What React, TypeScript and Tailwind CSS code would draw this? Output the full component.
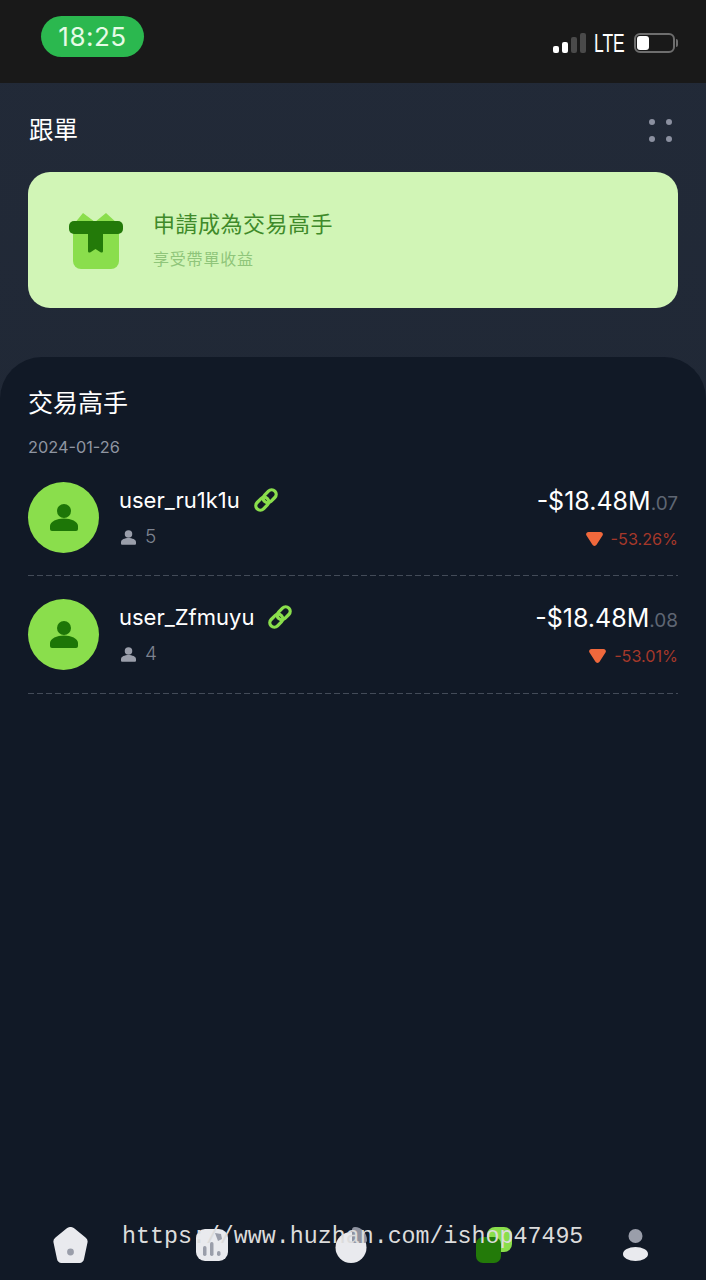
import React from "react";

const cjk = "font-['Inter','Noto_Sans_CJK_TC',sans-serif]";

const traders = [
  { name: "user_ru1k1u", followers: 5, whole: "-$18.48M", cents: ".07", pct: "-53.26%" },
  { name: "user_Zfmuyu", followers: 4, whole: "-$18.48M", cents: ".08", pct: "-53.01%" },
];

const PersonIcon = ({ className, fill }: { className: string; fill: string }) => (
  <svg viewBox="0 0 28 27" className={className} fill={fill}>
    <circle cx="14" cy="7" r="7" />
    <path d="M0 25v-3C0 17.500 7 14.500 14 14.500s14 3 14 7.500v3a2 2 0 0 1-2 2H2a2 2 0 0 1-2-2z" />
  </svg>
);

const LinkIcon = () => (
  <svg viewBox="0 0 24 24" className="h-[24px] w-[24px]" fill="none" stroke="#8ade4c" strokeWidth="3.300">
    <rect x="-0.500" y="7.500" width="14.500" height="9" rx="4.500" transform="rotate(-45 12 12)" />
    <rect x="10" y="7.500" width="14.500" height="9" rx="4.500" transform="rotate(-45 12 12)" />
  </svg>
);

const DownIcon = () => (
  <svg viewBox="0 0 17 14" className="h-[14px] w-[17px]">
    <path d="M2.500 0h12c2 0 3 2 2 3.600l-5.800 9c-1 1.700-3.400 1.700-4.400 0l-5.800-9C-.5 2 .5 0 2.500 0z" fill="#f0683c" />
  </svg>
);

function StatusBar() {
  return (
    <div className="flex h-[83px] shrink-0 justify-between bg-[#191919] pl-[41px] pr-[28px]">
      <div className="mt-[16px] flex h-[41px] w-[103px] items-center justify-center rounded-full bg-[#2bb84f] font-['Inter',sans-serif] text-[26px] tracking-[0.5px] text-[#e6fbe6]">
        18:25
      </div>
      <div className="mt-[33px] flex h-[20px] items-end gap-[8px]">
        <div className="flex items-end gap-[3px]">
          <span className="h-[7px] w-[6px] rounded-[2px] bg-white" />
          <span className="h-[11px] w-[6px] rounded-[2px] bg-white" />
          <span className="h-[16px] w-[6px] rounded-[2px] bg-[#4a4a4a]" />
          <span className="h-[20px] w-[6px] rounded-[2px] bg-[#4a4a4a]" />
        </div>
        <span className="w-[32px] origin-left scale-x-[0.7] whitespace-nowrap font-['Liberation_Sans',sans-serif] text-[25px] leading-[20px] text-white">LTE</span>
        <div className="flex items-center">
          <div className="flex h-[20px] w-[41px] items-center rounded-[6px] border-2 border-[#6e6e6e] pl-[1px]">
            <span className="h-[14px] w-[12px] rounded-[3px] bg-white" />
          </div>
          <span className="ml-[1px] h-[8px] w-[2px] rounded-r-full bg-[#6e6e6e]" />
        </div>
      </div>
    </div>
  );
}

function GiftIcon() {
  return (
    <svg viewBox="0 0 54 57" className="h-[57px] w-[54px]">
      <path d="M5 12l9-11 12 9 11-9 12 11z" fill="#8ade4c" />
      <path d="M4 12h46v37a8 8 0 0 1-8 8H12a8 8 0 0 1-8-8z" fill="#8ade4c" />
      <rect x="0" y="9" width="54" height="13" rx="5" fill="#237a09" />
      <path d="M19 21h15v18c0 1.500-1.500 2-2.500 1.200L26.500 37l-5 3.200C20.500 41 19 40.500 19 39z" fill="#237a09" />
    </svg>
  );
}

function TraderRow({ name, followers, whole, cents, pct }: (typeof traders)[number]) {
  return (
    <div className="flex h-[118px] flex-col pt-[23px] first:pt-[24px]">
      <div className="flex items-start justify-between">
        <div className="flex items-center gap-[20px]">
          <div className="flex h-[71px] w-[71px] items-center justify-center rounded-full bg-[#8ade4c]">
            <PersonIcon className="h-[27px] w-[28px]" fill="#1d7607" />
          </div>
          <div className="flex flex-col gap-[11px]">
            <div className="flex items-center gap-[14px]">
              <span className="text-[22px] leading-[28px] text-white">{name}</span>
              <LinkIcon />
            </div>
            <div className="flex items-center gap-[9px] pl-[2px]">
              <PersonIcon className="h-[15px] w-[15px]" fill="#9a9eaa" />
              <span className="text-[19px] font-light leading-[24px] text-[#7d8390]">{followers}</span>
            </div>
          </div>
        </div>
        <div className="flex flex-col items-end gap-[9px] pt-[3px]">
          <div className="flex items-baseline">
            <span className="text-[25px] leading-[32px] text-white">{whole}</span>
            <span className="text-[19px] leading-[32px] text-[#5f6673]">{cents}</span>
          </div>
          <div className="flex items-center gap-[8px]">
            <DownIcon />
            <span className="text-[16.200px] leading-[20px] text-[#a5382a]">{pct}</span>
          </div>
        </div>
      </div>
      <div className="mt-auto h-px bg-[repeating-linear-gradient(90deg,#434b58_0,#434b58_6px,transparent_6px,transparent_9px)]" />
    </div>
  );
}

function BottomNav() {
  return (
    <div className="grid h-[66px] shrink-0 grid-cols-5 justify-items-center pt-[13px]">
      <svg viewBox="0 0 35 36" className="h-[36px] w-[35px]">
        <path d="M13.500 1.500a6 6 0 0 1 8 0L32.500 10.500a5 5 0 0 1 2 5L31 32a5 5 0 0 1-4.500 4H8.500A5 5 0 0 1 4 32L.5 15.500a5 5 0 0 1 2-5z" fill="#e9eaee" />
        <circle cx="17.500" cy="25" r="3.400" fill="#9a9eaa" />
      </svg>
      <svg viewBox="0 0 32 32" className="mt-[2px] h-[32px] w-[32px]">
        <rect width="32" height="32" rx="9" fill="#e9eaee" />
        <rect x="7" y="17" width="3.500" height="10" rx="1.700" fill="#9a9eaa" />
        <rect x="14" y="13" width="3.500" height="14" rx="1.700" fill="#9a9eaa" />
        <rect x="21" y="22" width="3.500" height="5" rx="1.700" fill="#9a9eaa" />
        <path d="M19 4l6 1 1 5-4 2z" fill="#9a9eaa" />
      </svg>
      <svg viewBox="0 0 32 36" className="mr-[4px] h-[36px] w-[32px]">
        <circle cx="16" cy="20.500" r="15.500" fill="#e9eaee" />
        <path d="M17 3a3 3 0 0 1 3-3c6 0 12 6 12 13a3 3 0 0 1-3 3H20a3 3 0 0 1-3-3z" fill="#8f93a0" />
      </svg>
      <svg viewBox="0 0 36 36" className="h-[36px] w-[36px]">
        <rect x="11" y="0" width="25" height="25" rx="8" fill="#8ade4c" />
        <rect x="0" y="10" width="25" height="26" rx="7" fill="#237a09" />
      </svg>
      <svg viewBox="0 0 25 32" className="mt-[2px] h-[32px] w-[25px]">
        <circle cx="12.500" cy="7" r="7" fill="#9a9eaa" />
        <ellipse cx="12.500" cy="25" rx="12.500" ry="7" fill="#e9eaee" />
      </svg>
    </div>
  );
}

export default function App() {
  return (
    <div className={`relative flex h-[1280px] w-[706px] flex-col overflow-hidden bg-gradient-to-b from-[#222a38] to-[#1d2532] ${cjk}`}>
      <StatusBar />

      <div className="flex items-center justify-between pl-[29px] pr-[34px] pt-[31px]">
        <span className="text-[24.500px] leading-[32px] text-white">跟單</span>
        <div className="grid grid-cols-2 gap-[11px]">
          <span className="h-[6px] w-[6px] rounded-full bg-[#8b90a0]" />
          <span className="h-[6px] w-[6px] rounded-full bg-[#8b90a0]" />
          <span className="h-[6px] w-[6px] rounded-full bg-[#8b90a0]" />
          <span className="h-[6px] w-[6px] rounded-full bg-[#8b90a0]" />
        </div>
      </div>

      <div className="mx-[28px] mt-[26px] flex h-[136px] items-center gap-[30px] rounded-[22px] bg-[#d1f5b6] pl-[41px]">
        <GiftIcon />
        <div className="flex flex-col gap-[8px] pb-[2px]">
          <span className="text-[22px] leading-[32px] tracking-[0.5px] text-[#3f8a2a]">申請成為交易高手</span>
          <span className="text-[16px] leading-[22px] tracking-[0.8px] text-[#8fc57a]">享受帶單收益</span>
        </div>
      </div>

      <div className="mt-[49px] flex flex-1 flex-col rounded-t-[42px] bg-[#111926]">
        <div className="flex-1 px-[28px] pt-[29px]">
          <div className="text-[25px] leading-[34px] text-white">交易高手</div>
          <div className="mt-[16px] text-[16.300px] leading-[22px] text-[#8f95a1]">2024-01-26</div>
          <div>
            {traders.map((t) => (
              <TraderRow key={t.name} {...t} />
            ))}
          </div>
        </div>
        <BottomNav />
      </div>

      {/* watermark sits over the nav */}
      <div className="absolute left-[122px] top-[1222px] font-['Liberation_Mono',monospace] text-[23.300px] leading-[30px] text-[#dcdcdc]">
        https://www.huzhan.com/ishop47495
      </div>
    </div>
  );
}
